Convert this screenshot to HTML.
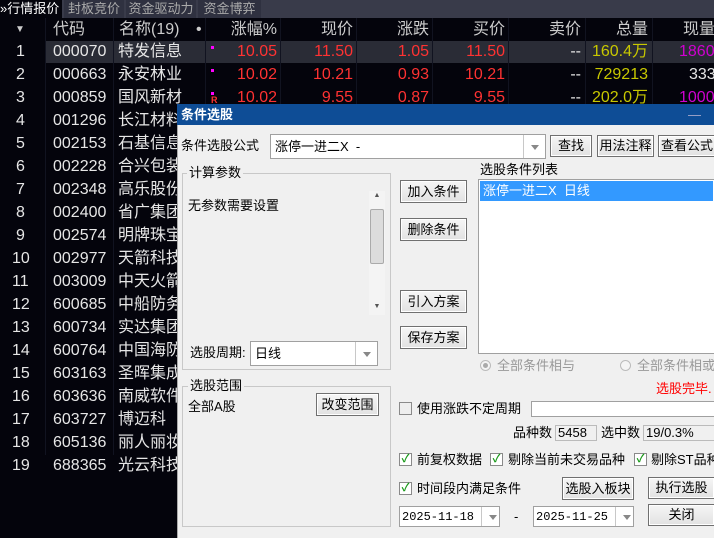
<!DOCTYPE html>
<html><head><meta charset="utf-8"><style>
*{margin:0;padding:0;box-sizing:border-box}
body{width:714px;height:538px;overflow:hidden;background:#04040c;font-family:"Liberation Sans","Noto Sans CJK SC",sans-serif;position:relative}
.a{position:absolute;white-space:nowrap}
.t{font-size:16px;color:#e6e6e6;line-height:23px}
.r{text-align:right}
.red{color:#ff3232}
.yl{color:#c8c800}
.mg{color:#d000d0}
.vl{position:absolute;top:18px;width:1px;height:437px;background:#111320}
.d{font-size:13px;color:#000;line-height:16px}
.btn{position:absolute;background:linear-gradient(#f6f6f6,#e2e2e2);border:1px solid #707070;box-shadow:inset 0 0 0 1px #fff;font-size:13px;text-align:center;color:#000}
.box{position:absolute;background:#fff;border:1px solid #a0a0a0}
.grp{position:absolute;border:1px solid #c8c8c8}
.cb{position:absolute;width:13px;height:13px;border:1px solid #8a8a8a;background:#fff;font-size:11px;line-height:11px;color:#1a9a1a;text-align:center;font-weight:bold}
.arr{position:absolute;right:0;top:0;bottom:0;width:22px;border-left:1px solid #c8c8c8}
.arr:after{content:"";position:absolute;left:7px;top:50%;margin-top:-2px;border:4px solid transparent;border-top:5px solid #888}
.n{left:16px}.n2{left:12px}
.tab{position:absolute;top:0;height:18px;background:#2f3140;color:#aaa;font-size:13px;line-height:18px;text-align:center;overflow:hidden}
</style></head><body>
<div class="a" style="left:0;top:0;width:714px;height:18px;background:#393b4a"></div>
<div class="tab" style="left:0;width:62px;background:#04040c;color:#fff;text-align:left">»行情报价</div>
<div class="tab" style="left:64px;width:60px">封板竞价</div>
<div class="tab" style="left:126px;width:70px">资金驱动力</div>
<div class="tab" style="left:198px;width:63px">资金博弈</div>
<div class="a" style="left:46px;top:41px;width:668px;height:22px;background:#2a2c36"></div>
<div class="vl" style="left:45px"></div><div class="vl" style="left:113px"></div><div class="vl" style="left:205px"></div><div class="vl" style="left:280px"></div><div class="vl" style="left:356px"></div><div class="vl" style="left:432px"></div><div class="vl" style="left:508px"></div><div class="vl" style="left:585px"></div><div class="vl" style="left:652px"></div>
<div class="a t" style="left:15px;top:18px;color:#ccc;font-size:10px">▼</div>
<div class="a t" style="left:53px;top:18px;color:#ccc">代码</div>
<div class="a t" style="left:119px;top:18px;color:#ccc">名称(19)</div>
<div class="a t" style="left:196px;top:18px;color:#ccc">•</div>
<div class="a t r" style="left:210px;width:67px;top:18px;color:#ccc">涨幅%</div>
<div class="a t r" style="left:290px;width:63px;top:18px;color:#ccc">现价</div>
<div class="a t r" style="left:360px;width:69px;top:18px;color:#ccc">涨跌</div>
<div class="a t r" style="left:440px;width:65px;top:18px;color:#ccc">买价</div>
<div class="a t r" style="left:510px;width:71px;top:18px;color:#ccc">卖价</div>
<div class="a t r" style="left:590px;width:58px;top:18px;color:#ccc">总量</div>
<div class="a t" style="left:683px;top:18px;color:#ccc">现量</div>
<div class="a t" style="left:0;top:40px;width:200px">
<div style="position:relative;height:23px"><span class="a n">1</span><span class="a" style="left:53px">000070</span><span class="a" style="left:118px">特发信息</span></div>
<div style="position:relative;height:23px"><span class="a n">2</span><span class="a" style="left:53px">000663</span><span class="a" style="left:118px">永安林业</span></div>
<div style="position:relative;height:23px"><span class="a n">3</span><span class="a" style="left:53px">000859</span><span class="a" style="left:118px">国风新材</span></div>
<div style="position:relative;height:23px"><span class="a n">4</span><span class="a" style="left:53px">001296</span><span class="a" style="left:118px">长江材料</span></div>
<div style="position:relative;height:23px"><span class="a n">5</span><span class="a" style="left:53px">002153</span><span class="a" style="left:118px">石基信息</span></div>
<div style="position:relative;height:23px"><span class="a n">6</span><span class="a" style="left:53px">002228</span><span class="a" style="left:118px">合兴包装</span></div>
<div style="position:relative;height:23px"><span class="a n">7</span><span class="a" style="left:53px">002348</span><span class="a" style="left:118px">高乐股份</span></div>
<div style="position:relative;height:23px"><span class="a n">8</span><span class="a" style="left:53px">002400</span><span class="a" style="left:118px">省广集团</span></div>
<div style="position:relative;height:23px"><span class="a n">9</span><span class="a" style="left:53px">002574</span><span class="a" style="left:118px">明牌珠宝</span></div>
<div style="position:relative;height:23px"><span class="a n2">10</span><span class="a" style="left:53px">002977</span><span class="a" style="left:118px">天箭科技</span></div>
<div style="position:relative;height:23px"><span class="a n2">11</span><span class="a" style="left:53px">003009</span><span class="a" style="left:118px">中天火箭</span></div>
<div style="position:relative;height:23px"><span class="a n2">12</span><span class="a" style="left:53px">600685</span><span class="a" style="left:118px">中船防务</span></div>
<div style="position:relative;height:23px"><span class="a n2">13</span><span class="a" style="left:53px">600734</span><span class="a" style="left:118px">实达集团</span></div>
<div style="position:relative;height:23px"><span class="a n2">14</span><span class="a" style="left:53px">600764</span><span class="a" style="left:118px">中国海防</span></div>
<div style="position:relative;height:23px"><span class="a n2">15</span><span class="a" style="left:53px">603163</span><span class="a" style="left:118px">圣晖集成</span></div>
<div style="position:relative;height:23px"><span class="a n2">16</span><span class="a" style="left:53px">603636</span><span class="a" style="left:118px">南威软件</span></div>
<div style="position:relative;height:23px"><span class="a n2">17</span><span class="a" style="left:53px">603727</span><span class="a" style="left:118px">博迈科</span></div>
<div style="position:relative;height:23px"><span class="a n2">18</span><span class="a" style="left:53px">605136</span><span class="a" style="left:118px">丽人丽妆</span></div>
<div style="position:relative;height:23px"><span class="a n2">19</span><span class="a" style="left:53px">688365</span><span class="a" style="left:118px">光云科技</span></div>
</div>
<div class="a" style="left:211px;top:46px;width:3px;height:3px;background:#f0f"></div>
<div class="a" style="left:211px;top:69px;width:3px;height:3px;background:#f0f"></div>
<div class="a" style="left:211px;top:92px;width:3px;height:3px;background:#f0f"></div>
<div class="a" style="left:211px;top:95px;color:#ff3232;font-size:9px;font-weight:bold">R</div>
<div class="a t r red" style="left:210px;width:67px;top:40px">10.05</div>
<div class="a t r red" style="left:290px;width:63px;top:40px">11.50</div>
<div class="a t r red" style="left:360px;width:69px;top:40px">1.05</div>
<div class="a t r red" style="left:440px;width:65px;top:40px">11.50</div>
<div class="a t r" style="left:510px;width:71px;top:40px">--</div>
<div class="a t r yl" style="left:590px;width:58px;top:40px">160.4万</div>
<div class="a t mg" style="left:679px;top:40px">1860</div>
<div class="a t r red" style="left:210px;width:67px;top:63px">10.02</div>
<div class="a t r red" style="left:290px;width:63px;top:63px">10.21</div>
<div class="a t r red" style="left:360px;width:69px;top:63px">0.93</div>
<div class="a t r red" style="left:440px;width:65px;top:63px">10.21</div>
<div class="a t r" style="left:510px;width:71px;top:63px">--</div>
<div class="a t r yl" style="left:590px;width:58px;top:63px">729213</div>
<div class="a t" style="left:689px;top:63px">333</div>
<div class="a t r red" style="left:210px;width:67px;top:86px">10.02</div>
<div class="a t r red" style="left:290px;width:63px;top:86px">9.55</div>
<div class="a t r red" style="left:360px;width:69px;top:86px">0.87</div>
<div class="a t r red" style="left:440px;width:65px;top:86px">9.55</div>
<div class="a t r" style="left:510px;width:71px;top:86px">--</div>
<div class="a t r yl" style="left:590px;width:58px;top:86px">202.0万</div>
<div class="a t mg" style="left:679px;top:86px">1000</div>
<div class="a" style="left:177px;top:104px;width:537px;height:434px;background:#f0f0f0;border-left:1px solid #aaa"></div>
<div class="a" style="left:177px;top:104px;width:537px;height:21px;background:#0e4d96;color:#fff;font-size:13px;font-weight:bold;line-height:21px;padding-left:4px">条件选股</div>
<div class="a" style="left:688px;top:104px;color:#aac;font-size:13px;line-height:21px">—</div>
<div class="a d" style="left:181px;top:138px">条件选股公式</div>
<div class="box" style="left:270px;top:134px;width:276px;height:25px"><span class="a d" style="left:4px;top:4px">涨停一进二X&nbsp; -</span><div class="arr"></div></div>
<div class="btn" style="left:550px;top:135px;width:42px;height:22px;line-height:20px">查找</div>
<div class="btn" style="left:597px;top:135px;width:57px;height:22px;line-height:20px">用法注释</div>
<div class="btn" style="left:658px;top:135px;width:58px;height:22px;line-height:20px">查看公式</div>
<div class="grp" style="left:182px;top:173px;width:209px;height:197px"></div>
<div class="a d" style="left:187px;top:165px;background:#f0f0f0;padding:0 2px">计算参数</div>
<div class="a d" style="left:188px;top:198px">无参数需要设置</div>
<div class="a" style="left:369px;top:191px;width:16px;height:124px;background:#f4f4f4"></div>
<div class="a" style="left:369px;top:192px;width:16px;color:#555;font-size:7px;text-align:center">▲</div>
<div class="a" style="left:369px;top:303px;width:16px;color:#555;font-size:7px;text-align:center">▼</div>
<div class="a" style="left:370px;top:209px;width:14px;height:55px;background:#dcdcdc;border:1px solid #aaa;border-radius:2px"></div>
<div class="a d" style="left:190px;top:345px">选股周期:</div>
<div class="box" style="left:250px;top:341px;width:128px;height:25px"><span class="a d" style="left:4px;top:4px">日线</span><div class="arr"></div></div>
<div class="btn" style="left:400px;top:180px;width:67px;height:23px;line-height:21px">加入条件</div>
<div class="btn" style="left:400px;top:218px;width:67px;height:23px;line-height:21px">删除条件</div>
<div class="btn" style="left:400px;top:290px;width:67px;height:23px;line-height:21px">引入方案</div>
<div class="btn" style="left:400px;top:326px;width:67px;height:23px;line-height:21px">保存方案</div>
<div class="a d" style="left:480px;top:162px">选股条件列表</div>
<div class="box" style="left:478px;top:179px;width:240px;height:175px"></div>
<div class="a" style="left:480px;top:181px;width:233px;height:20px;background:#3399ff;color:#fff;font-size:13px;line-height:20px;padding-left:3px">涨停一进二X&nbsp; 日线</div>
<div class="a" style="left:480px;top:360px;width:11px;height:11px;border:1px solid #bbb;border-radius:50%;background:#f4f4f4"><div style="margin:2px;width:5px;height:5px;border-radius:50%;background:#aaa"></div></div>
<div class="a d" style="left:497px;top:358px;color:#999">全部条件相与</div>
<div class="a" style="left:620px;top:360px;width:11px;height:11px;border:1px solid #bbb;border-radius:50%;background:#f4f4f4"></div>
<div class="a d" style="left:637px;top:358px;color:#999">全部条件相或</div>
<div class="a d" style="left:656px;top:381px;color:#ff0000">选股完毕.</div>
<div class="grp" style="left:182px;top:386px;width:209px;height:141px"></div>
<div class="a d" style="left:188px;top:378px;background:#f0f0f0;padding:0 2px">选股范围</div>
<div class="a d" style="left:188px;top:399px">全部A股</div>
<div class="btn" style="left:316px;top:393px;width:63px;height:23px;line-height:21px">改变范围</div>
<div class="cb" style="left:399px;top:402px;background:#eee"></div>
<div class="a d" style="left:417px;top:401px">使用涨跌不定周期</div>
<div class="box" style="left:531px;top:401px;width:190px;height:16px"></div>
<div class="a d" style="left:513px;top:425px">品种数</div>
<div class="a" style="left:555px;top:425px;width:42px;height:16px;border:1px solid #bbb;font-size:13px;line-height:14px;padding-left:2px">5458</div>
<div class="a d" style="left:601px;top:425px">选中数</div>
<div class="a" style="left:643px;top:425px;width:75px;height:16px;border:1px solid #bbb;font-size:13px;line-height:14px;padding-left:2px">19/0.3%</div>
<div class="cb" style="left:399px;top:453px">✓</div><div class="a d" style="left:417px;top:452px">前复权数据</div>
<div class="cb" style="left:490px;top:453px">✓</div><div class="a d" style="left:508px;top:452px">剔除当前未交易品种</div>
<div class="cb" style="left:634px;top:453px">✓</div><div class="a d" style="left:651px;top:452px">剔除ST品种</div>
<div class="cb" style="left:399px;top:482px">✓</div><div class="a d" style="left:417px;top:481px">时间段内满足条件</div>
<div class="btn" style="left:562px;top:477px;width:72px;height:23px;line-height:21px">选股入板块</div>
<div class="btn" style="left:648px;top:477px;width:67px;height:22px;line-height:20px">执行选股</div>
<div class="btn" style="left:648px;top:504px;width:67px;height:22px;line-height:20px">关闭</div>
<div class="box" style="left:399px;top:506px;width:101px;height:21px"><span class="a d" style="left:2px;top:2px;font-family:'Liberation Mono',monospace;font-size:12px">2025-11-18</span><div class="arr" style="width:18px"></div></div>
<div class="a d" style="left:514px;top:509px">-</div>
<div class="box" style="left:533px;top:506px;width:101px;height:21px"><span class="a d" style="left:2px;top:2px;font-family:'Liberation Mono',monospace;font-size:12px">2025-11-25</span><div class="arr" style="width:18px"></div></div>
</body></html>
